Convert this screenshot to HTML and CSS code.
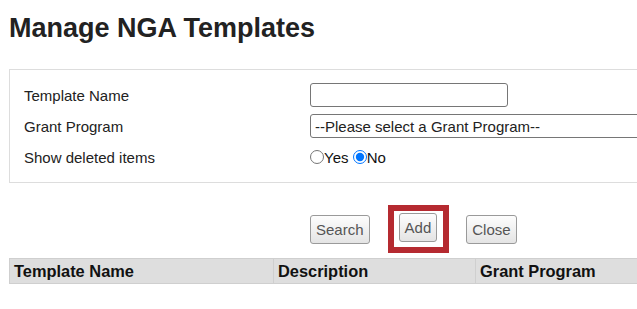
FILE: index.html
```html
<!DOCTYPE html>
<html>
<head>
<meta charset="utf-8">
<link rel="stylesheet" href="styles.css">
</head>
<body>
<div class="page">
  <h1 class="title">Manage NGA Templates</h1>
  <div class="panel">
    <div class="form-grid">
      <div class="label">Template Name</div>
      <div class="field"><input type="text" class="text-input"></div>
      <div class="label">Grant Program</div>
      <div class="field"><select class="select"><option>--Please select a Grant Program--</option></select></div>
      <div class="label">Show deleted items</div>
      <div class="field radios"><input type="radio" name="del" class="radio">Yes&nbsp;<input type="radio" name="del" class="radio" checked>No</div>
    </div>
  </div>
  <div class="actions">
    <button class="btn">Search</button>
    <span class="highlight"><button class="btn">Add</button></span>
    <button class="btn">Close</button>
  </div>
  <table class="grid">
    <thead>
      <tr>
        <th class="col-name">Template Name</th>
        <th class="col-desc">Description</th>
        <th class="col-prog">Grant Program</th>
      </tr>
    </thead>
  </table>
</div>
</body>
</html>
```
FILE: styles.css
```css
html, body {
  margin: 0;
  padding: 0;
  background: #fff;
  overflow: hidden;
}
body {
  font-family: "Liberation Sans", Arial, sans-serif;
  color: #222;
}
.page {
  padding: 0 0 0 9px;
  width: 800px;
}
.title {
  margin: 12px 0 0 0;
  font-size: 27px;
  font-weight: bold;
  line-height: 32px;
  color: #222;
}
.panel {
  margin-top: 25px;
  border: 1px solid #ddd;
  padding: 13px 0 13px 14px;
}
.form-grid {
  display: grid;
  grid-template-columns: 286px 1fr;
  grid-template-rows: 24px 24px 24px;
  row-gap: 7px;
  align-items: center;
}
.label {
  font-size: 15px;
  color: #222;
}
.field {
  display: flex;
  align-items: center;
  font-size: 15px;
}
.text-input {
  box-sizing: border-box;
  width: 198px;
  height: 24px;
  margin: 0;
  border: 1px solid #767676;
  border-radius: 3px;
  padding: 1px 4px;
  font: 15px "Liberation Sans", Arial, sans-serif;
}
.select {
  box-sizing: border-box;
  width: 400px;
  height: 24px;
  margin: 0;
  border: 1px solid #767676;
  border-radius: 3px;
  padding: 0;
  font: 15px "Liberation Sans", Arial, sans-serif;
  color: #222;
  background: #fff;
}
.radios {
  color: #111;
}
.radio {
  margin: 0;
  width: 14px;
  height: 14px;
}
.actions {
  display: flex;
  align-items: center;
  padding-left: 301px;
  margin-top: 22px;
  height: 48px;
}
.btn {
  box-sizing: border-box;
  height: 29px;
  padding: 0 5px;
  margin: 0;
  border: 1px solid #9a9a9a;
  border-radius: 3px;
  background: linear-gradient(#fdfdfd, #e4e4e4);
  font: 15px "Liberation Sans", Arial, sans-serif;
  color: #555;
}
.highlight {
  display: inline-flex;
  border: 6px solid #b52a30;
  padding: 2px 6px 5px 5px;
  margin: 0 17px 0 18px;
}
.grid {
  margin-top: 5px;
  border-collapse: collapse;
  width: 720px;
  table-layout: fixed;
}
.grid th {
  background: #dedede;
  border: 1px solid #cfcfcf;
  text-align: left;
  font-size: 16.4px;
  font-weight: bold;
  color: #111;
  height: 24px;
  padding: 0 4px;
}
.col-name { width: 255px; }
.col-desc { width: 193px; }
.col-prog { width: 255px; }
```
